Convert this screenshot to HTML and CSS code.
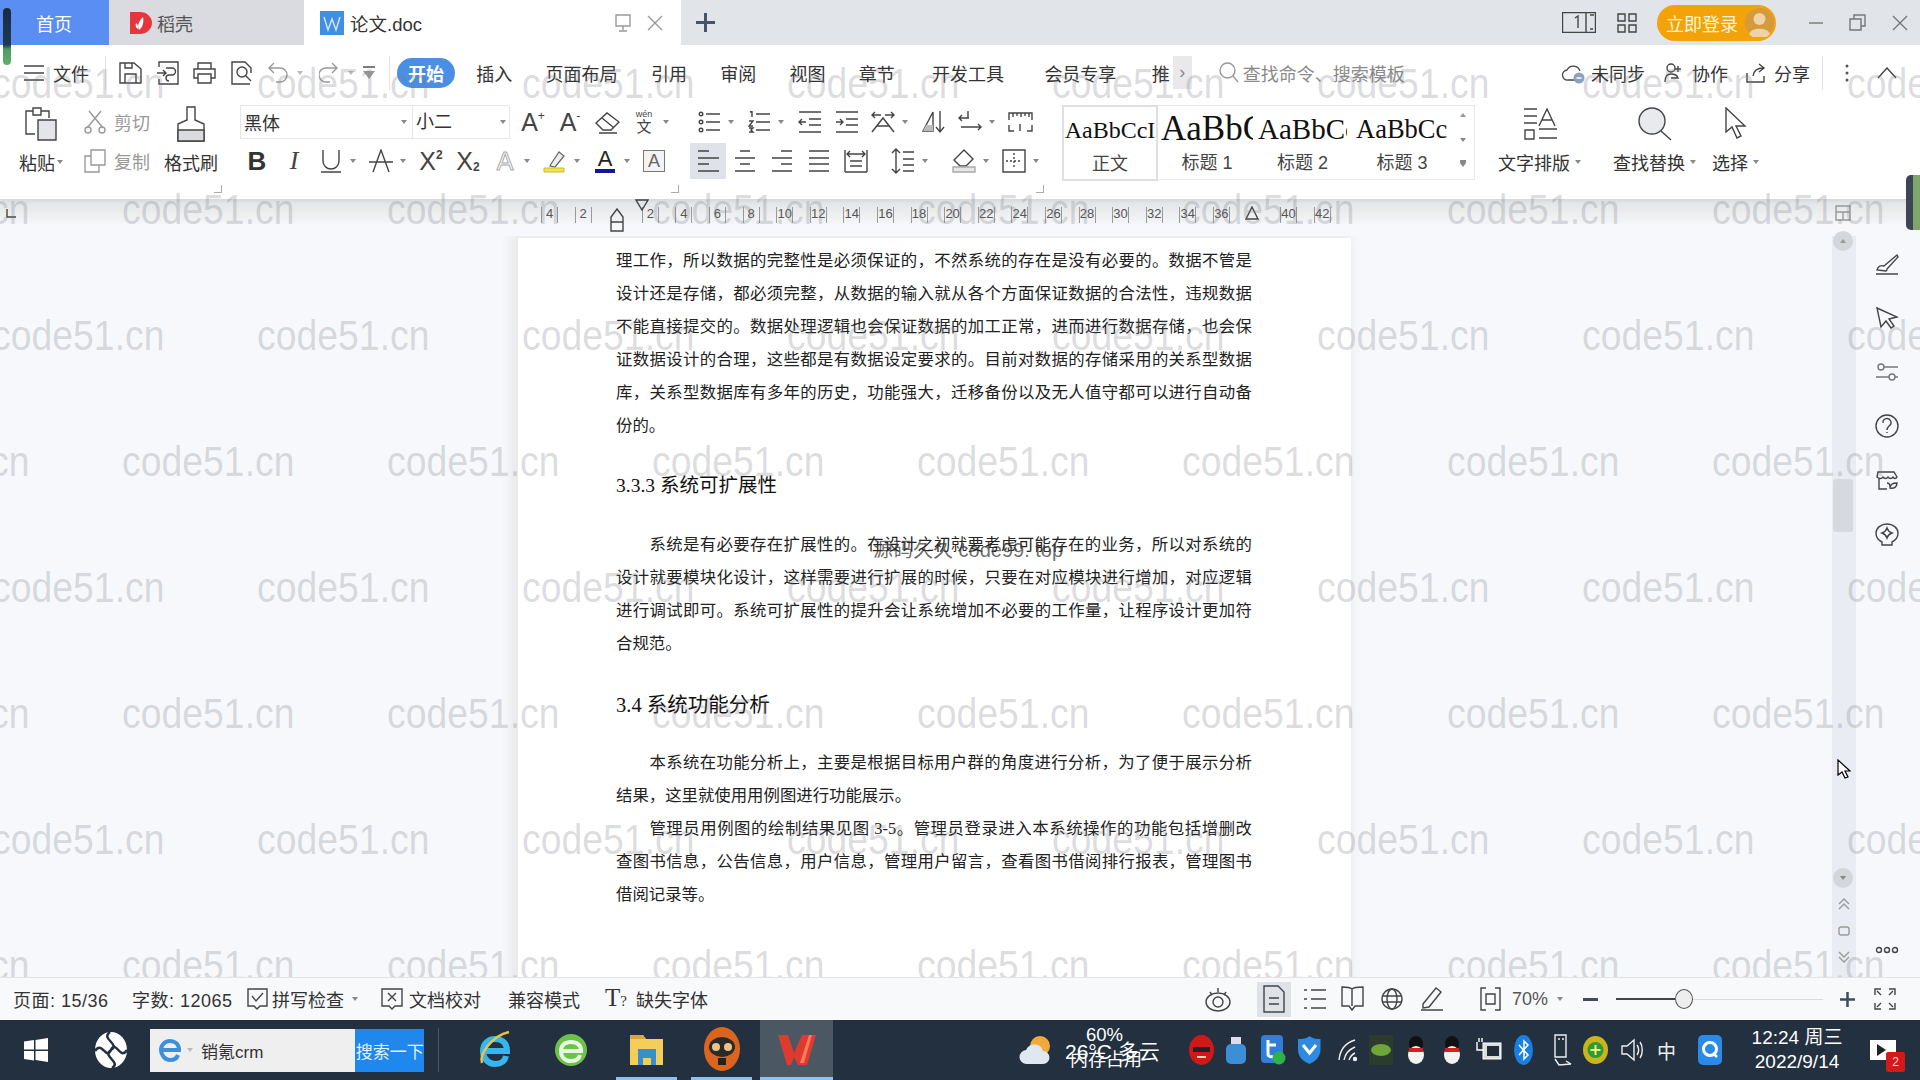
FILE: index.html
```html
<!DOCTYPE html>
<html lang="zh-CN">
<head>
<meta charset="utf-8">
<title>论文.doc - WPS</title>
<link rel="stylesheet" href="styles.css">
</head>
<body>
<div class="app">

<header class="tabbar">
  <div class="tab tab-home">首页</div>
  <div class="tab tab-dk">
    <svg width="23" height="24" viewBox="0 0 23 24"><path d="M0 1h10a12 11 0 0 1 0 22H0z" fill="#e8343c"/><path d="M9 19c-2-5 0-9 4-13 1 5 0 10-4 13zM6 12c-1 3 0 5 2 6 0-3 0-5-2-6z" fill="#fff"/></svg>
    <span>稻壳</span>
  </div>
  <div class="tab tab-doc">
    <svg width="24" height="24" viewBox="0 0 24 24"><rect width="24" height="24" fill="#3f8fe4"/><path d="M4 6l4 13 4-11 4 11 4-13" fill="none" stroke="#cfe4fa" stroke-width="1.500"/></svg>
    <span class="doc-name">论文.doc</span>
    <svg class="tab-mon i lite" width="16" height="18" viewBox="0 0 16 18"><path d="M1 1h14v11H1zM8 12v4M4 17h8"/></svg>
    <svg class="tab-x i lite" width="16" height="16" viewBox="0 0 16 16"><path d="M1 1l14 14M15 1L1 15"/></svg>
  </div>
  <svg class="tab-plus" width="19" height="19" viewBox="0 0 19 19"><path d="M9.500 0v19M0 9.500h19" stroke="#44546a" stroke-width="3"/></svg>
  <div class="tabbar-right">
    <svg class="i" width="34" height="21" viewBox="0 0 34 21"><path d="M.5.500h33v20H.5zM24 .5v20M13 6l3-2v12M28 3h4M28 17h3"/></svg>
    <svg class="i ml21" width="20" height="20" viewBox="0 0 20 20"><path d="M1 1h7v7H1zM12 1h7v7h-7zM1 12h7v7H1zM12 12h7v7h-7z"/></svg>
    <div class="login">
      <span>立即登录</span>
      <svg width="29" height="29" viewBox="0 0 29 29"><circle cx="14.500" cy="14.500" r="14.500" fill="#d59a3c"/><circle cx="14.500" cy="11" r="6" fill="#efd2a6"/><path d="M4 26c2-7 19-7 21 0a14 14 0 0 1-21 0z" fill="#efd2a6"/></svg>
    </div>
    <span class="vline ml13"></span>
    <svg class="i lite2 ml19" width="14" height="2" viewBox="0 0 14 2"><path d="M0 1h14"/></svg>
    <svg class="i lite2 ml26" width="17" height="17" viewBox="0 0 17 17"><path d="M1 5h11v11H1zM5 5V1h11v11h-4"/></svg>
    <svg class="i lite2 ml26" width="16" height="16" viewBox="0 0 16 16"><path d="M1 1l14 14M15 1L1 15"/></svg>
  </div>
</header>

<nav class="menubar">
  <svg class="i" width="20" height="16" viewBox="0 0 20 16"><path d="M0 1h20M0 8h20M0 15h20"/></svg>
  <span class="ml9">文件</span>
  <span class="vline ml16"></span>
  <div class="qa">
    <svg class="i" width="23" height="24" viewBox="0 0 23 24"><path d="M1 2h14l7 6v14H1zM6 22v-9h11v9M6 2v5h7V2"/></svg>
    <svg class="i" width="23" height="24" viewBox="0 0 23 24"><path d="M3 6V1h19v22H3v-5M1 12h9M7 9l3 3-3 3M10 7h6a3 3 0 0 1 0 7h-3a3 3 0 0 0 0 6"/></svg>
    <svg class="i" width="23" height="24" viewBox="0 0 23 24"><path d="M5 8V2h13v6M5 17H1V8h21v9h-4M5 13h13v9H5z"/></svg>
    <svg class="i" width="23" height="24" viewBox="0 0 23 24"><path d="M20 23H2V1h13l6 6v5M7 11a5 5 0 1 0 10 0 5 5 0 1 0-10 0M16 15l5 5"/></svg>
    <svg class="i gray" width="21" height="22" viewBox="0 0 21 22"><path d="M7 1L2 6l5 5M2 6h11a6.500 6.500 0 0 1 0 14H9"/></svg>
  </div>
  <i class="arr lgt ml9"></i>
  <svg class="i gray ml16" width="20" height="22" viewBox="0 0 20 22"><path d="M13 1l5 5-5 5M18 6H7a6.500 6.500 0 0 0 0 14h4"/></svg>
  <i class="arr lgt ml9"></i>
  <svg class="i ml9" width="12" height="16" viewBox="0 0 12 16"><path d="M0 2h12"/><path d="M0 6h12l-6 8z" fill="#999" stroke="none"/></svg>
  <span class="vline ml14"></span>
  <div class="menu-tabs">
    <span class="pill">开始</span>
    <span>插入</span><span>页面布局</span><span>引用</span><span>审阅</span><span>视图</span><span>章节</span>
    <span class="ml4">开发工具</span><span class="ml7">会员专享</span><span class="m-clip">推</span>
  </div>
  <div class="more">›</div>
  <svg class="i gray ml27" width="20" height="21" viewBox="0 0 20 21"><circle cx="8.500" cy="8.500" r="7.500"/><path d="M14 14l5 6"/></svg>
  <span class="search-t">查找命令、搜索模板</span>
  <div class="menu-right">
    <svg width="24" height="24" viewBox="0 0 24 24"><path d="M17 19H7a5 5 0 0 1-1-10 7 7 0 0 1 13 1" fill="none" stroke="#444" stroke-width="1.300"/><circle cx="18" cy="17" r="5.500" fill="#8aa2bd"/><path d="M15.500 17h5" stroke="#fff" stroke-width="1.500"/></svg>
    <span class="ml6">未同步</span>
    <svg class="i ml19" width="18" height="20" viewBox="0 0 18 20"><circle cx="7" cy="5" r="4"/><path d="M1 19c0-6 3-8 6-8s6 1 7 4H7M14 3v6M11 6h6"/></svg>
    <span class="ml10">协作</span>
    <svg class="i ml17" width="21" height="20" viewBox="0 0 21 20"><path d="M2 10v9h17v-6M8 13c1-6 5-8 10-8M14 1l5 4-5 4"/></svg>
    <span class="ml8">分享</span>
    <span class="vline ml12"></span>
    <svg class="ml20" width="8" height="20" viewBox="0 0 8 20"><circle cx="4" cy="3" r="1.500" fill="#555"/><circle cx="4" cy="10" r="1.500" fill="#555"/><circle cx="4" cy="17" r="1.500" fill="#555"/></svg>
    <svg class="i ml26" width="20" height="12" viewBox="0 0 20 12"><path d="M1 11L10 1l9 10"/></svg>
  </div>
</nav>

<section class="ribbon">
  <div class="sec sec-clip corner">
    <div class="big big-paste">
      <div class="big-ic"><svg class="i" width="32" height="34" viewBox="0 0 32 34"><path d="M10 27H1V4h7V1h8v3h8v7M8 4v4h8V4"/><path d="M13 13h18v20H13z" fill="#e3e5e9"/></svg></div>
      <div class="big-t">粘贴<i class="arr ml2"></i></div>
    </div>
    <div class="cc">
      <div class="cc-r"><svg class="i lite" width="22" height="24" viewBox="0 0 22 24"><path d="M5 1l14 17M17 1L3 18"/><circle cx="4" cy="20" r="3"/><circle cx="18" cy="20" r="3"/></svg><span>剪切</span></div>
      <div class="cc-r"><svg class="i lite" width="22" height="24" viewBox="0 0 22 24"><path d="M7 1h14v15H7zM7 7H1v16h14v-7"/></svg><span>复制</span></div>
    </div>
    <div class="big big-brush">
      <div class="big-ic"><svg class="i" width="28" height="36" viewBox="0 0 28 36"><path d="M10 14V1h8v13l9 4v17H1V18z"/><path d="M1 24h26v11H1z" fill="#d9dbdf"/></svg></div>
      <div class="big-t">格式刷</div>
    </div>
  </div>

  <div class="sec sec-font corner">
    <div class="row">
      <div class="fontbox"><span class="fb-name">黑体</span><i class="arr"></i><span class="fb-size">小二</span><i class="arr"></i></div>
      <span class="tb up-first">A<sup class="s">+</sup></span>
      <span class="tb">A<sup class="s">-</sup></span>
      <span class="tb"><svg class="i" width="25" height="24" viewBox="0 0 25 24"><path d="M1 13L12 3l12 9-8 8H8zM7 8l11 9M4 23h18"/></svg></span>
      <span class="tb wen"><small>wén</small><b>文</b></span><i class="arr"></i>
    </div>
    <div class="row row2">
      <span class="tb bold">B</span>
      <span class="tb ital">I</span>
      <span class="tb"><svg class="i" width="22" height="24" viewBox="0 0 22 24"><path d="M3 1v11a8 8 0 0 0 16 0V1M1 23h20"/></svg></span><i class="arr"></i>
      <span class="tb"><svg class="i" width="24" height="24" viewBox="0 0 24 24"><path d="M4 23L12 1l8 22M0 13h24"/></svg></span><i class="arr"></i>
      <span class="tb">X<sup class="s n">2</sup></span>
      <span class="tb">X<sub class="s n">2</sub></span>
      <span class="tb pale">A</span><i class="arr"></i>
      <span class="tb"><svg width="24" height="24" viewBox="0 0 24 24"><path d="M8 15l8-12 5 4-9 11-5-1z" fill="#eee" stroke="#666" stroke-width="1.200"/><path d="M1 19h20v4H1z" fill="#f0e44a" stroke="#c8bc30"/></svg></span><i class="arr"></i>
      <span class="tb blue-a">A<em></em></span><i class="arr"></i>
      <span class="tb boxed">A</span>
    </div>
  </div>

  <div class="sec sec-para corner">
    <div class="row">
      <span class="tb"><svg class="i" width="23" height="22" viewBox="0 0 23 22"><circle cx="3" cy="3" r="1.800"/><circle cx="3" cy="11" r="1.800"/><circle cx="3" cy="19" r="1.800"/><path d="M8 3h14M8 11h14M8 19h14"/></svg></span><i class="arr"></i>
      <span class="tb"><svg class="i" width="23" height="22" viewBox="0 0 23 22"><path d="M2 1l2-1v6M1 10h4l-4 5h4M1 17h4l-2 2 2 2H1M8 3h14M8 11h14M8 19h14"/></svg></span><i class="arr"></i>
      <span class="tb"><svg class="i" width="23" height="22" viewBox="0 0 23 22"><path d="M1 1h22M11 8h12M11 14h12M1 21h22M8 11H1M4 8l-3 3 3 3"/></svg></span>
      <span class="tb"><svg class="i" width="23" height="22" viewBox="0 0 23 22"><path d="M1 1h22M11 8h12M11 14h12M1 21h22M1 11h7M5 8l3 3-3 3"/></svg></span>
      <span class="tb"><svg class="i" width="24" height="24" viewBox="0 0 24 24"><path d="M1 22L12 8l11 14M6 16h12M1 5h9M4 2L1 5l3 3M23 5h-9M20 2l3 3-3 3"/></svg></span><i class="arr"></i>
      <span class="tb"><svg class="i" width="24" height="24" viewBox="0 0 24 24"><path d="M2 21L12 2v19zM19 1v20M15 17l4 5 4-5"/><path d="M5 15h7v6H2z" fill="#bbb" stroke="none"/></svg></span>
      <span class="tb"><svg class="i" width="24" height="24" viewBox="0 0 24 24"><path d="M1 8h10M4 5L1 8l3 3M10 1v7M3 17h20M20 14l3 3-3 3"/></svg></span><i class="arr"></i>
      <span class="tb"><svg class="i" width="25" height="20" viewBox="0 0 25 20"><path d="M1 8V1h23v7M5 1v4M9 1v3M13 1v4M17 1v3M21 1v4M1 13v6h5M24 13v6h-5M12 12v7"/></svg></span>
    </div>
    <div class="row row2p">
      <span class="tb active"><svg class="i" width="22" height="22" viewBox="0 0 22 22"><path d="M1 1h11M1 8h21M1 14h11M1 21h21"/></svg></span>
      <span class="tb"><svg class="i" width="22" height="22" viewBox="0 0 22 22"><path d="M6 1h10M1 8h20M6 14h10M1 21h20"/></svg></span>
      <span class="tb"><svg class="i" width="22" height="22" viewBox="0 0 22 22"><path d="M10 1h11M1 8h20M10 14h11M1 21h20"/></svg></span>
      <span class="tb"><svg class="i" width="22" height="22" viewBox="0 0 22 22"><path d="M1 1h20M1 8h20M1 14h20M1 21h20"/></svg></span>
      <span class="tb"><svg class="i" width="24" height="24" viewBox="0 0 24 24"><path d="M1 1v22M23 1v22M1 23h22M6 12h12M6 17h12M3 5h18M6 2L3 5l3 3M18 2l3 3-3 3"/></svg></span>
      <span class="tb ml10"><svg class="i" width="24" height="26" viewBox="0 0 24 26"><path d="M5 1v24M1 5l4-4 4 4M1 21l4 4 4-4M12 4h11M12 11h11M12 17h11M12 23h11"/></svg></span><i class="arr"></i>
      <span class="tb ml11"><svg class="i" width="24" height="24" viewBox="0 0 24 24"><path d="M12 1l9 9-7 7H8l-6-6z"/><path d="M1 18h22v5H1z" fill="#e5e5e5" stroke="#aaa"/></svg></span><i class="arr"></i>
      <span class="tb"><svg class="i" width="24" height="24" viewBox="0 0 24 24"><path d="M1 1h22v22H1z"/><path d="M12 4v16M4 12h16" stroke-dasharray="2 2"/></svg></span><i class="arr"></i>
    </div>
  </div>

  <div class="gallery">
    <div class="sty sty1"><div class="smp s1">AaBbCcI</div><div class="lbl">正文</div></div>
    <div class="sty sty2"><div class="smp s2">AaBbCc</div><div class="lbl">标题 1</div></div>
    <div class="sty sty3"><div class="smp s3">AaBbCc</div><div class="lbl">标题 2</div></div>
    <div class="sty sty4"><div class="smp s4">AaBbCcDd</div><div class="lbl">标题 3</div></div>
    <div class="sty-sc">
      <i class="arr arr-up lgt"></i>
      <i class="arr"></i>
      <i class="arr arr-line"></i>
    </div>
  </div>

  <div class="big big-wz">
    <div class="big-ic"><svg class="i" width="34" height="32" viewBox="0 0 34 32"><path d="M1 1h13M1 8h13M1 15h13M2 22h9v9H2zM16 18L24 1l8 17M19 12h10M16 21h18M16 30h18"/></svg></div>
    <div class="big-t">文字排版<i class="arr ml5"></i></div>
  </div>
  <div class="big big-fd">
    <div class="big-ic"><svg width="34" height="34" viewBox="0 0 34 34"><circle cx="14" cy="14" r="13" fill="#e9eaed" stroke="#444" stroke-width="1.400"/><path d="M23 24l10 9" stroke="#444" stroke-width="1.400"/></svg></div>
    <div class="big-t">查找替换<i class="arr ml5"></i></div>
  </div>
  <div class="big big-sl">
    <div class="big-ic"><svg class="i" width="24" height="34" viewBox="0 0 24 34"><path d="M2 1v24l6-5 5 11 4-2-5-10h9z"/></svg></div>
    <div class="big-t">选择<i class="arr ml5"></i></div>
  </div>
</section>

<div class="ruler">
  <svg class="r-tab i" width="10" height="10" viewBox="0 0 10 10"><path d="M1 1v8h9"/></svg>
  <div class="r-scale">
    <span>4</span><span>2</span><span class="r-no"></span><span>2</span><span>4</span><span>6</span><span>8</span><span>10</span><span>12</span><span>14</span><span>16</span><span>18</span><span>20</span><span>22</span><span>24</span><span>26</span><span>28</span><span>30</span><span>32</span><span>34</span><span>36</span><span class="r-no"></span><span>40</span><span>42</span>
  </div>
  <svg class="r-m1 i" width="14" height="24" viewBox="0 0 14 24"><path d="M7 1l6 8v5H1V9zM1 14h12v9H1z"/></svg>
  <svg class="r-m2 i" width="14" height="12" viewBox="0 0 14 12"><path d="M1 1h12l-6 10z"/></svg>
  <svg class="r-m3 i" width="14" height="14" viewBox="0 0 14 14"><path d="M7 1l6 12H1z"/></svg>
  <svg class="r-end i lite" width="16" height="16" viewBox="0 0 16 16"><path d="M1 1h14v14H1zM1 7h14M8 7v8"/></svg>
</div>

<main class="main">
  <div class="doc">
    <article class="page">
      <p class="ln">理工作，所以数据的完整性是必须保证的，不然系统的存在是没有必要的。数据不管是</p>
      <p class="ln">设计还是存储，都必须完整，从数据的输入就从各个方面保证数据的合法性，违规数据</p>
      <p class="ln">不能直接提交的。数据处理逻辑也会保证数据的加工正常，进而进行数据存储，也会保</p>
      <p class="ln">证数据设计的合理，这些都是有数据设定要求的。目前对数据的存储采用的关系型数据</p>
      <p class="ln">库，关系型数据库有多年的历史，功能强大，迁移备份以及无人值守都可以进行自动备</p>
      <p class="ln end">份的。</p>
      <h3 class="h333">3.3.3 系统可扩展性</h3>
      <p class="ln ind">系统是有必要存在扩展性的。在设计之初就要考虑可能存在的业务，所以对系统的</p>
      <p class="ln">设计就要模块化设计，这样需要进行扩展的时候，只要在对应模块进行增加，对应逻辑</p>
      <p class="ln">进行调试即可。系统可扩展性的提升会让系统增加不必要的工作量，让程序设计更加符</p>
      <p class="ln end">合规范。</p>
      <h3 class="h34">3.4 系统功能分析</h3>
      <p class="ln ind">本系统在功能分析上，主要是根据目标用户群的角度进行分析，为了便于展示分析</p>
      <p class="ln end">结果，这里就使用用例图进行功能展示。</p>
      <p class="ln ind">管理员用例图的绘制结果见图 3-5。管理员登录进入本系统操作的功能包括增删改</p>
      <p class="ln">查图书信息，公告信息，用户信息，管理用户留言，查看图书借阅排行报表，管理图书</p>
      <p class="ln end">借阅记录等。</p>
    </article>
    <div class="wm2">源码久久 code99. top</div>
  </div>
  <aside class="scroll">
    <div class="sb-btn sb-up"><i class="arr arr-up"></i></div>
    <div class="sb-thumb"></div>
    <div class="sb-btn sb-down"><i class="arr"></i></div>
    <svg class="sb-a i lite" width="12" height="12" viewBox="0 0 12 12"><path d="M1 6l5-5 5 5M1 11l5-5 5 5"/></svg>
    <svg class="sb-b i lite" width="12" height="10" viewBox="0 0 12 10"><rect x="1" y="1" width="10" height="8" rx="2"/></svg>
    <svg class="sb-c i lite" width="12" height="12" viewBox="0 0 12 12"><path d="M1 1l5 5 5-5M1 6l5 5 5-5"/></svg>
    <svg class="cursor" width="14" height="20" viewBox="0 0 14 20"><path d="M1 1v15l4-3 3 6 3-1-3-6h5z" fill="#fff" stroke="#000" stroke-width="1.200"/></svg>
  </aside>
  <aside class="side">
    <svg class="i" width="24" height="24" viewBox="0 0 24 24"><path d="M2 18c1-4 4-5 7-4L22 3l1 2L12 17c0 1 0 2-1 2zM1 22h22"/></svg>
    <svg class="i" width="24" height="24" viewBox="0 0 24 24"><path d="M2 2l20 9-8 2 5 7-3 2-5-7-5 6z"/></svg>
    <svg class="i lite2" width="24" height="24" viewBox="0 0 24 24"><circle cx="6" cy="7" r="3"/><circle cx="17" cy="17" r="3"/><path d="M9 7h14M1 17h13M20 17h3"/></svg>
    <svg class="i" width="24" height="24" viewBox="0 0 24 24"><circle cx="12" cy="12" r="11"/><path d="M8 9a4 4 0 1 1 6 3c-1 1-2 2-2 4M12 18v1"/></svg>
    <svg class="i" width="24" height="24" viewBox="0 0 24 24"><path d="M3 4h16l3 5c-1 2-3 2-4 0-1 2-4 2-5 0-1 2-4 2-5 0-1 2-4 2-6 0zM4 11v10h8M15 20c0-3 2-5 7-5 0 4-3 6-7 5zM12 15c2 0 3 1 3 4"/></svg>
    <svg class="i" width="24" height="24" viewBox="0 0 24 24"><path d="M12 2c6 0 11 4 11 9s-4 8-6 9v3H7v-3c-2-1-6-4-6-9s5-9 11-9zM12 6c1 3 2 4 5 5-3 1-4 2-5 5-1-3-2-4-5-5 3-1 4-2 5-5z"/></svg>
    <svg class="side-dots i" width="24" height="8" viewBox="0 0 24 8"><circle cx="4" cy="4" r="2.500"/><circle cx="12" cy="4" r="2.500"/><circle cx="20" cy="4" r="2.500"/></svg>
  </aside>
</main>

<footer class="status">
  <span class="st st1">页面: 15/36</span>
  <span class="st st2">字数: 12065</span>
  <svg class="i" width="21" height="24" viewBox="0 0 21 24"><path d="M1 2h19v17h-7l-3 3-3-3H1zM5 9l4 5 7-8"/></svg>
  <span class="ml4">拼写检查</span><i class="arr ml8"></i>
  <svg class="i ml23" width="22" height="24" viewBox="0 0 22 24"><path d="M1 2h20v17h-7l-3 3-3-3H1zM7 6l8 8M15 6l-8 8"/></svg>
  <span class="ml6">文档校对</span>
  <span class="ml27">兼容模式</span>
  <span class="t-q ml25">T<small>?</small></span>
  <span class="ml9">缺失字体</span>
  <div class="st-right">
    <svg class="i" width="26" height="26" viewBox="0 0 26 26"><ellipse cx="13" cy="16" rx="12" ry="9"/><circle cx="13" cy="16" r="5"/><path d="M5 6l2 3M13 2v4M21 6l-2 3"/></svg>
    <span class="view-active ml26"><svg class="i" width="22" height="28" viewBox="0 0 22 28"><path d="M1 1h14l6 6v20H1zM6 13h10M6 19h10"/></svg></span>
    <svg class="i ml12" width="23" height="22" viewBox="0 0 23 22"><path d="M1 2h3M8 2h15M1 11h3M8 11h15M1 20h3M8 20h15"/></svg>
    <svg class="i ml15" width="23" height="26" viewBox="0 0 23 26"><path d="M1 1c4 0 8 0 10 2 2-2 6-2 11-2v19H14l-3 4-3-4H1zM11 3v17"/></svg>
    <svg class="i ml17" width="22" height="24" viewBox="0 0 22 24"><circle cx="11" cy="12" r="10"/><ellipse cx="11" cy="12" rx="5" ry="10"/><path d="M1 9h20M1 15h20"/></svg>
    <svg class="i ml17" width="25" height="24" viewBox="0 0 25 24"><path d="M3 17L16 1l5 4L9 20l-6 1zM1 23h22"/></svg>
    <svg class="i ml35" width="21" height="24" viewBox="0 0 21 24"><path d="M6 1H1v22h5M15 1h5v22h-5M6 7h9v10H6z"/></svg>
    <span class="z70 ml11">70%</span><i class="arr ml5"></i>
    <span class="minus ml20"></span>
    <div class="slider ml18"><span class="s-a"></span><span class="s-k"></span><span class="s-b"></span></div>
    <svg class="ml17" width="15" height="15" viewBox="0 0 15 15"><path d="M7.500 0v15M0 7.500h15" stroke="#3d4d60" stroke-width="2.500"/></svg>
    <svg class="i ml19" width="22" height="22" viewBox="0 0 22 22"><path d="M1 7V1h6M3 3l4 4M15 1h6v6M19 3l-4 4M1 15v6h6M3 19l4-4M15 21h6v-6M19 19l-4-4"/></svg>
  </div>
</footer>

<footer class="taskbar">
  <svg class="win" width="24" height="24" viewBox="0 0 24 24"><path d="M0 3.500l10-1.500v9.500H0zM11.500 2L24 0v11.500H11.500zM0 13h10v9.500L0 21zM11.500 13H24v11l-12.500-2z" fill="#fff"/></svg>
  <svg class="swirl" width="32" height="36" viewBox="0 0 32 36"><ellipse cx="16" cy="18" rx="16" ry="18" fill="#fff"/><path d="M15 0C5 7 26 12 16 18S27 30 17 36M0 19c7-11 11 10 16-1s9 11 16 0" fill="none" stroke="#22303f" stroke-width="2.500"/></svg>
  <div class="tsearch">
    <svg class="ts-e" width="24" height="30" viewBox="0 0 24 30"><path d="M3 15h18c0-6-4-9-9-9s-9 4-9 9 4 10 9 10c4 0 7-2 8-5" fill="none" stroke="#3a8fe0" stroke-width="4"/></svg>
    <i class="arr lgt ml5"></i>
    <span class="ts-t">销氪crm</span>
    <span class="ts-btn">搜索一下</span>
  </div>
  <span class="tdiv"></span>
  <svg class="tapp a-ie" width="34" height="40" viewBox="0 0 34 40"><path d="M5 21h24c0-8-5-12-12-12S5 14 5 21s5 13 12 13c6 0 10-3 11-8" fill="none" stroke="#35b6ec" stroke-width="6"/><path d="M4 33C1 24 14 6 31 2" fill="none" stroke="#e6c34a" stroke-width="2.500"/></svg>
  <svg class="tapp a-ge" width="34" height="40" viewBox="0 0 34 40"><circle cx="17" cy="20" r="16" fill="#6cc24a"/><path d="M7 21h20c0-6-4-9-10-9S7 15 7 21s4 10 10 10c5 0 8-2 9-6" fill="none" stroke="#e9f8e2" stroke-width="4"/></svg>
  <div class="tbtn b-fold"><svg width="35" height="36" viewBox="0 0 35 36"><path d="M1 4h13l3 4h17v26H1z" fill="#f4cd5a"/><path d="M1 4h13l3 4H1z" fill="#d9a63a"/><path d="M9 18h18v16h-5v-7h-8v7H9z" fill="#3a8ecf"/></svg></div>
  <div class="tbtn b-face"><svg width="36" height="44" viewBox="0 0 36 44"><ellipse cx="18" cy="22" rx="18" ry="22" fill="#d9651e"/><ellipse cx="18" cy="20" rx="13" ry="10" fill="#2a2a2a"/><circle cx="12" cy="20" r="4" fill="#e8c48a"/><circle cx="24" cy="20" r="4" fill="#e8c48a"/><rect x="14" y="31" width="8" height="7" fill="#222"/></svg></div>
  <div class="tbtn b-wps"><svg width="38" height="34" viewBox="0 0 38 34"><path d="M0 3h10l6 18L24 3h14l-9 30h-9l-4-8-3 8H9z" fill="#e03a2e"/><path d="M22 31L31 3h3l-8 28z" fill="#f77a5a"/></svg></div>
  <div class="tray">
    <div class="weather">
      <svg width="33" height="30" viewBox="0 0 33 30"><circle cx="21" cy="11" r="10" fill="#f2a93c"/><path d="M8 29a7 7 0 0 1-1-14 9 9 0 0 1 17 1 6.500 6.500 0 0 1 0 13z" fill="#dfe7f0"/></svg>
      <span class="w-main">26°C 多云</span>
      <span class="w-pct">60%</span>
      <span class="w-mem">内存占用</span>
    </div>
    <svg class="tr r1" width="25" height="30" viewBox="0 0 25 30"><ellipse cx="12.500" cy="15" rx="12.500" ry="15" fill="#d11818"/><path d="M4 12h17v5H4z" fill="#222"/><path d="M8 21h9v2H8z" fill="#f2d0b0"/></svg>
    <svg class="tr r2" width="20" height="30" viewBox="0 0 20 30"><path d="M5 2h10v8H5z" fill="#dde"/><rect y="9" width="20" height="20" rx="5" fill="#3c8ed8"/></svg>
    <svg class="tr r3" width="25" height="30" viewBox="0 0 25 30"><rect width="22" height="28" rx="4" fill="#2f7fd8"/><path d="M7 5v14c0 3 3 3 6 3M7 10h8" stroke="#fff" stroke-width="3" fill="none"/><circle cx="18" cy="23" r="6.500" fill="#2eb34a"/></svg>
    <svg class="tr r4" width="23" height="30" viewBox="0 0 23 30"><path d="M11.500 1c4 3 7 3 11 3v11c0 7-6 12-11 14C6 27 0 22 0 15V4c4 0 8 0 11.500-3z" fill="#2f8ae0"/><path d="M5 10l6.500 8L18 10" fill="none" stroke="#fff" stroke-width="3"/></svg>
    <svg class="tr r5 i wh" width="20" height="24" viewBox="0 0 20 24"><path d="M1 22C2 12 7 5 17 2M6 22c1-6 4-10 11-13M11 22c1-3 2-5 6-7"/><circle cx="17" cy="21" r="1.500" fill="#fff"/></svg>
    <svg class="tr r6" width="24" height="30" viewBox="0 0 24 30"><rect width="24" height="30" fill="#2b3b2e"/><ellipse cx="12" cy="15" rx="10" ry="6" fill="#6fa53a"/></svg>
    <svg class="tr r7" width="18" height="28" viewBox="0 0 18 28"><ellipse cx="9" cy="8" rx="7" ry="8" fill="#111"/><ellipse cx="9" cy="19" rx="8" ry="9" fill="#f3f3f3"/><path d="M2 12h14v4H2z" fill="#d42020"/></svg>
    <svg class="tr r8" width="18" height="28" viewBox="0 0 18 28"><ellipse cx="9" cy="8" rx="7" ry="8" fill="#111"/><ellipse cx="9" cy="19" rx="8" ry="9" fill="#f3f3f3"/><path d="M2 12h14v4H2z" fill="#d42020"/></svg>
    <svg class="tr r9" width="26" height="24" viewBox="0 0 26 24"><path d="M1 4v8h6M3 4V0M6 4V0" stroke="#fff" fill="none" stroke-width="1.400"/><rect x="7" y="5" width="18" height="16" fill="#ddd" stroke="#fff"/><rect x="11" y="8" width="12" height="10" fill="#1f2d3a"/></svg>
    <svg class="tr r10" width="19" height="30" viewBox="0 0 19 30"><ellipse cx="9.500" cy="15" rx="9.500" ry="15" fill="#1b7fe0"/><path d="M5 10l9 10-4 4V6l4 4-9 10" fill="none" stroke="#fff" stroke-width="1.500"/></svg>
    <svg class="tr r11 i wh" width="19" height="32" viewBox="0 0 19 32"><path d="M2 1h11v22H2zM5 5h2M9 5h2M2 25l4 6 12-1M13 27l5 3"/></svg>
    <svg class="tr r12" width="25" height="28" viewBox="0 0 25 28"><ellipse cx="12.500" cy="14" rx="12.500" ry="14" fill="#cbb51c"/><circle cx="12.500" cy="14" r="8" fill="#2b9c3a"/><path d="M12.500 9v10M7.500 14h10" stroke="#f6ee70" stroke-width="2"/></svg>
    <svg class="tr r13 i wh" width="22" height="24" viewBox="0 0 22 24"><path d="M1 8h5l7-6v20l-7-6H1zM16 7c2 3 2 7 0 10M19 4c3 4 3 12 0 16"/></svg>
    <span class="tr r14">中</span>
    <svg class="tr r15" width="24" height="30" viewBox="0 0 24 30"><rect width="24" height="30" rx="5" fill="#2a8ae8"/><circle cx="12" cy="14" r="6.500" fill="none" stroke="#fff" stroke-width="3"/><path d="M15 18l4 4" stroke="#fff" stroke-width="2.500"/></svg>
    <div class="clock"><div>12:24 周三</div><div>2022/9/14</div></div>
    <div class="notif"><i class="n-play"></i><span class="n-badge">2</span></div>
  </div>
</footer>

<div class="wm" aria-hidden="true">
  <div class="wm-r rb"><span>code51.cn</span><span>code51.cn</span><span>code51.cn</span><span>code51.cn</span><span>code51.cn</span><span>code51.cn</span><span>code51.cn</span><span>code51.cn</span></div>
  <div class="wm-r ra"><span>code51.cn</span><span>code51.cn</span><span>code51.cn</span><span>code51.cn</span><span>code51.cn</span><span>code51.cn</span><span>code51.cn</span><span>code51.cn</span></div>
  <div class="wm-r rb"><span>code51.cn</span><span>code51.cn</span><span>code51.cn</span><span>code51.cn</span><span>code51.cn</span><span>code51.cn</span><span>code51.cn</span><span>code51.cn</span></div>
  <div class="wm-r ra"><span>code51.cn</span><span>code51.cn</span><span>code51.cn</span><span>code51.cn</span><span>code51.cn</span><span>code51.cn</span><span>code51.cn</span><span>code51.cn</span></div>
  <div class="wm-r rb"><span>code51.cn</span><span>code51.cn</span><span>code51.cn</span><span>code51.cn</span><span>code51.cn</span><span>code51.cn</span><span>code51.cn</span><span>code51.cn</span></div>
  <div class="wm-r ra"><span>code51.cn</span><span>code51.cn</span><span>code51.cn</span><span>code51.cn</span><span>code51.cn</span><span>code51.cn</span><span>code51.cn</span><span>code51.cn</span></div>
  <div class="wm-r rb"><span>code51.cn</span><span>code51.cn</span><span>code51.cn</span><span>code51.cn</span><span>code51.cn</span><span>code51.cn</span><span>code51.cn</span><span>code51.cn</span></div>
  <div class="wm-r ra"><span>code51.cn</span><span>code51.cn</span><span>code51.cn</span><span>code51.cn</span><span>code51.cn</span><span>code51.cn</span><span>code51.cn</span><span>code51.cn</span></div>
</div>
<div class="widget-l"></div>
<div class="widget-r"></div>
</div>
</body>
</html>
```

FILE: styles.css
```css
* { box-sizing: border-box; }
html, body { margin: 0; padding: 0; height: 100%; overflow: hidden; }
body { font-family: "Liberation Sans", "Noto Sans CJK SC", sans-serif; font-size: 18px; color: #333; background: #fff; }
.app { position: relative; width: 1920px; height: 1080px; display: flex; flex-direction: column; overflow: hidden; }
svg { display: block; flex: none; }
.i { fill: none; stroke: #444; stroke-width: 1.400; }
.i.gray { stroke: #999; }
.i.lite { stroke: #999; }
.i.lite2 { stroke: #777; }
.i.wh { stroke: #eee; }
.ml2 { margin-left: 2px; } .ml4 { margin-left: 4px; } .ml5 { margin-left: 5px; } .ml6 { margin-left: 6px; }
.ml7 { margin-left: 7px; } .ml8 { margin-left: 8px; } .ml9 { margin-left: 9px; } .ml10 { margin-left: 10px; }
.ml11 { margin-left: 11px; } .ml12 { margin-left: 12px; } .ml13 { margin-left: 13px; } .ml14 { margin-left: 14px; }
.ml15 { margin-left: 15px; } .ml16 { margin-left: 16px; } .ml17 { margin-left: 17px; } .ml18 { margin-left: 18px; }
.ml19 { margin-left: 19px; } .ml20 { margin-left: 20px; } .ml21 { margin-left: 21px; } .ml23 { margin-left: 23px; }
.ml25 { margin-left: 25px; } .ml26 { margin-left: 26px; } .ml27 { margin-left: 27px; } .ml28 { margin-left: 28px; }
.ml35 { margin-left: 35px; }
.arr { display: block; flex: none; width: 6px; height: 4px; border-left: 3px solid transparent; border-right: 3px solid transparent; border-top: 4px solid #888; }
.arr.lgt { border-top-color: #bbb; }
.arr-up { border-top: 0; border-bottom: 4px solid #999; }
.vline { display: block; flex: none; width: 1px; height: 34px; background: #e2e3e6; }

/* tab bar */
.tabbar { height: 45px; flex: none; display: flex; align-items: stretch; background: #e1e4e8; }
.tab { display: flex; align-items: center; flex: none; }
.tab-home { width: 109px; padding-left: 36px; background: #5a8ef2; color: #fff; }
.tab-dk { width: 195px; padding-left: 21px; gap: 4px; background: #d9dbe0; color: #555; }
.tab-doc { width: 377px; padding-left: 16px; background: #fff; color: #333; }
.doc-name { margin-left: 6px; font-size: 18.500px; width: 77px; }
.tab-mon { margin-left: 188px; }
.tab-x { margin-left: 16px; }
.tab-plus { align-self: center; margin-left: 15px; }
.tabbar-right { margin-left: auto; padding-right: 12px; display: flex; align-items: center; }
.login { margin-left: 20px; width: 119px; height: 36px; border-radius: 18px; background: #f2a30a; color: #fff3d6; display: flex; align-items: center; justify-content: space-between; padding: 0 2px 0 9px; }

/* menu */
.menubar { height: 55px; flex: none; display: flex; align-items: center; padding-left: 24px; background: #fff; white-space: nowrap; }
.qa { margin-left: 13px; display: flex; align-items: center; gap: 14px; }
.menu-tabs { margin-left: 7px; display: flex; align-items: center; gap: 33.300px; }
.pill { height: 30px; padding: 0 11px; margin-right: -12px; border-radius: 15px; background: #4a8fe4; color: #fff; font-weight: bold; display: flex; align-items: center; }
.m-clip { margin-left: 2px; }
.more { margin-left: 3px; width: 19px; height: 33px; background: #e9e9ec; color: #888; display: flex; align-items: center; justify-content: center; }
.search-t { margin-left: 4px; color: #8a8a8a; }
.menu-right { margin-left: auto; padding-right: 23px; display: flex; align-items: center; }

/* ribbon */
.ribbon { height: 99px; flex: none; display: flex; align-items: flex-start; padding-top: 2px; background: #fff; position: relative; z-index: 1; box-shadow: 0 2px 4px rgba(0,0,0,.06); white-space: nowrap; }
.sec { flex: none; height: 97px; display: flex; }
.corner { position: relative; }
.corner::after { content: ""; position: absolute; right: 18px; bottom: 6px; width: 7px; height: 7px; border-right: 1px solid #aaa; border-bottom: 1px solid #aaa; }
.sec-clip { width: 240px; }
.sec-font { width: 457px; flex-direction: column; }
.sec-para { width: 365px; flex-direction: column; }
.big { flex: none; display: flex; flex-direction: column; align-items: center; }
.big-ic { height: 44px; display: flex; align-items: center; justify-content: center; }
.big-t { height: 32px; display: flex; align-items: center; }
.big-paste { margin-left: 19px; }
.cc { margin-left: 21px; display: flex; flex-direction: column; color: #999; }
.cc-r { height: 39px; display: flex; align-items: center; gap: 8px; }
.big-brush { margin-left: 14px; width: 54px; }
.row { height: 39px; flex: none; display: flex; align-items: center; gap: 13px; }
.row2 { padding-left: 5px; }
.row2p { padding-left: 0; margin-left: -1px; }
.row .arr { margin-left: -6px; }
.tb { flex: none; width: 24px; height: 24px; display: flex; align-items: center; justify-content: center; font-size: 25px; line-height: 24px; color: #444; position: relative; }
.s { font-size: 12px; line-height: 1; margin-left: 0; }
.s.n { font-weight: bold; }
sup.s { align-self: flex-start; }
sub.s { align-self: flex-end; }
.bold { font-weight: bold; font-size: 26px; color: #333; }
.ital { font-family: "Liberation Serif", serif; font-style: italic; font-size: 26px; }
.pale { color: #fff; -webkit-text-stroke: 1px #aaa; }
.blue-a { font-size: 22px; color: #222; flex-direction: column; line-height: 19px; }
.blue-a em { display: block; width: 20px; height: 4px; background: #14149e; margin-top: 1px; }
.boxed { width: 22px; height: 22px; border: 1.500px solid #777; background: #f3f3f3; font-size: 18px; color: #666; }
.active { background: #dfe2e8; box-shadow: 0 0 0 6px #dfe2e8; }
.up-first { margin-left: -2px; }
.fontbox { width: 270px; height: 34px; display: flex; align-items: center; border: 1px solid #e6e6e6; font-size: 18px; }
.fontbox .arr { margin-left: 0; }
.fb-name { margin-left: 3px; width: 157px; }
.fb-size { margin-left: 5px; padding-left: 3px; border-left: 1px solid #e8e8e8; width: 88px; line-height: 32px; }
.wen { flex-direction: column; color: #444; }
.wen small { font-size: 9px; line-height: 10px; }
.wen b { font-weight: normal; font-size: 15px; line-height: 15px; }
.gallery { flex: none; width: 413px; height: 75px; margin-top: 3px; display: flex; border: 1px solid #e8e8e8; border-left: 0; position: relative; }
.sty { flex: none; overflow: hidden; text-align: center; }
.smp { height: 44px; line-height: 46px; font-family: "Liberation Serif", serif; color: #111; white-space: nowrap; }
.lbl { height: 30px; line-height: 27px; font-size: 18px; color: #444; }
.sty1 { width: 96px; margin-left: 0; border: 2px solid #e0e0e0; border-top-width: 2px; margin-top: -1px; height: 76px; }
.sty2 { width: 92px; margin-left: 3px; }
.sty3 { width: 89px; margin-left: 5px; }
.sty4 { width: 92px; margin-left: 9px; }
.s1 { font-size: 24px; }
.s2 { font-size: 35px; text-align: left; }
.s3 { font-size: 29px; text-align: left; }
.s4 { font-size: 26.500px; text-align: left; }
.sty-sc { flex: none; margin-left: 5px; width: 20px; display: flex; flex-direction: column; align-items: center; gap: 21px; padding-top: 7px; }
.arr-line { box-shadow: 0 -3px 0 -0px #888; }
.big-wz { margin-left: 23px; }
.big-fd { margin-left: 32px; }
.big-sl { margin-left: 16px; }

/* ruler */
.ruler { height: 37px; flex: none; position: relative; background: linear-gradient(#e2e3e5 0, #f2f3f5 22px, #f6f8fb 26px); }
.r-tab { position: absolute; left: 6px; top: 9px; }
.r-scale { position: absolute; left: 541px; top: 8px; display: flex; gap: 16.600px; }
.r-scale span { flex: none; width: 17px; height: 16px; border-left: 1px solid #999; border-right: 1px solid #999; font-size: 13px; line-height: 13px; text-align: center; color: #555; }
.r-scale .r-no { border-color: transparent; }
.r-m1 { position: absolute; left: 610px; top: 9px; }
.r-m2 { position: absolute; left: 635px; top: 0; }
.r-m3 { position: absolute; left: 1245px; top: 7px; }
.r-end { position: absolute; left: 1835px; top: 6px; }

/* main */
.main { flex: 1; min-height: 0; display: flex; background: #f6f8fb; }
.doc { flex: none; width: 1832px; position: relative; overflow: hidden; padding: 2px 0 0 518px; }
.page { width: 833px; height: 800px; background: #fff; padding: 7px 99px 0 98px; box-shadow: -4px 0 10px 4px #e9e9ea; color: #222; font-family: "Liberation Serif", "Noto Sans CJK SC", serif; font-size: 16.400px; line-height: 32.900px; }
.ln { margin: 0; text-align: justify; text-align-last: justify; }
.ln.end { text-align-last: left; }
.ind { padding-left: 33.400px; }
h3 { margin: 0; font-weight: normal; color: #111; line-height: 32.900px; }
.h333 { font-size: 19.500px; margin-top: 27.500px; margin-bottom: 26px; }
.h34 { font-size: 20.500px; margin-top: 28.500px; margin-bottom: 25px; }
.wm2 { position: absolute; left: 873px; top: 302px; font-size: 20px; line-height: 24px; color: rgba(50,50,50,.72); white-space: nowrap; }
.scroll { flex: none; width: 24px; background: #e9ecf3; display: flex; flex-direction: column; align-items: center; position: relative; }
.sb-btn { flex: none; width: 20px; height: 20px; border-radius: 50%; background: #d3d6db; display: flex; align-items: center; justify-content: center; margin-left: -2px; }
.sb-up { margin-top: -5px; }
.sb-thumb { flex: none; width: 20px; height: 53px; margin: 228px 0 0 -2px; background: #d6d9de; border-radius: 3px; }
.sb-down { margin-top: 336px; }
.sb-a { margin-top: 10px; }
.sb-b { margin-top: 16px; }
.sb-c { margin-top: 15px; }
.cursor { position: absolute; left: 5px; top: 523px; }
.side { flex: none; width: 64px; padding-right: 2px; display: flex; flex-direction: column; align-items: center; gap: 30px; padding-top: 16px; }
.side-dots { margin-top: auto; margin-bottom: 23px; }

/* status */
.status { height: 43px; flex: none; display: flex; align-items: center; padding-left: 13px; background: #f8f9fb; border-top: 1px solid #e3e4e6; white-space: nowrap; position: relative; z-index: 2; }
.st { letter-spacing: .5px; }
.st1 { width: 119px; }
.st2 { width: 115px; }
.t-q { font-family: "Liberation Serif", serif; font-size: 25px; line-height: 28px; }
.t-q small { font-size: 15px; }
.st-right { margin-left: auto; padding-right: 24px; display: flex; align-items: center; }
.view-active { width: 34px; height: 35px; background: #dfe3e8; display: flex; align-items: center; justify-content: center; }
.z70 { width: 40px; color: #555; }
.minus { width: 15px; height: 3px; background: #3d4d60; }
.slider { width: 207px; display: flex; align-items: center; }
.s-a { width: 59px; height: 2px; background: #444; }
.s-k { width: 18px; height: 20px; border-radius: 50%; border: 1.500px solid #555; background: #eee; }
.s-b { flex: 1; height: 1px; background: #ddd; }

/* taskbar */
.taskbar { height: 60px; flex: none; display: flex; align-items: center; background: #22303f; color: #fff; padding-left: 24px; position: relative; z-index: 2; white-space: nowrap; }
.swirl { margin-left: 47px; }
.tsearch { margin-left: 23px; width: 274px; height: 43px; display: flex; align-items: center; background: #efefef; color: #333; padding-left: 8px; font-size: 17px; }
.ts-t { margin-left: 8px; width: 155px; }
.ts-btn { margin-left: auto; width: 69px; height: 43px; background: #1f88ef; color: #e4f1ff; display: flex; align-items: center; justify-content: center; font-size: 17px; }
.tdiv { margin-left: 14px; width: 1px; height: 44px; background: #4a5663; }
.a-ie { margin-left: 39px; }
.a-ge { margin-left: 42px; }
.tbtn { flex: none; height: 60px; display: flex; align-items: center; justify-content: center; border-bottom: 3px solid #8fc1ef; }
.b-fold { width: 61px; margin-left: 28px; }
.b-face { width: 61px; margin-left: 14px; }
.b-wps { width: 73px; margin-left: 8px; background: #4b5763; }
.tray { flex: 1; display: flex; align-items: center; }
.weather { margin-left: 186px; display: flex; align-items: center; position: relative; }
.w-main { margin-left: 13px; font-size: 21px; width: 124px; }
.w-pct { position: absolute; left: 67px; top: -12px; font-size: 18.500px; line-height: 24px; }
.w-mem { position: absolute; left: 51px; top: 13px; font-size: 18px; line-height: 24px; }
.r1 { margin-left: 0; }
.r2 { margin-left: 12px; }
.r3 { margin-left: 15px; }
.r4 { margin-left: 12px; }
.r5 { margin-left: 17px; }
.r6 { margin-left: 11px; }
.r7 { margin-left: 14px; }
.r8 { margin-left: 18px; }
.r9 { margin-left: 15px; }
.r10 { margin-left: 12px; }
.r11 { margin-left: 20px; }
.r12 { margin-left: 11px; }
.r13 { margin-left: 13px; }
.r14 { margin-left: 14px; font-size: 19px; color: #eee; }
.r15 { margin-left: 22px; }
.clock { margin-left: 27px; width: 96px; text-align: center; font-size: 19px; line-height: 24px; }
.notif { margin-left: 25px; width: 26px; height: 20px; background: #fff; position: relative; }
.n-play { display: block; margin: 4px 0 0 7px; width: 0; height: 0; border-left: 9px solid #222; border-top: 6px solid transparent; border-bottom: 6px solid transparent; }
.n-badge { position: absolute; left: 16px; top: 12px; width: 19px; height: 20px; background: #d21a1a; color: #ffd9d9; font-size: 12px; line-height: 20px; text-align: center; border-radius: 2px; }

/* overlays */
.wm { position: absolute; left: 0; top: 21px; width: 1920px; height: 956px; overflow: hidden; pointer-events: none; z-index: 1; }
.wm-r { height: 126px; display: flex; align-items: center; }
.wm-r span { flex: none; width: 265px; font-family: "Liberation Sans", sans-serif; font-size: 42px; line-height: 50px; color: rgba(120,122,128,.26); white-space: nowrap; transform: scaleX(.89); transform-origin: 0 50%; }
.ra { margin-left: -143px; }
.rb { margin-left: -8px; }
.widget-l { position: absolute; left: 3px; top: 8px; width: 8px; height: 57px; border-radius: 4px; background: linear-gradient(#1b2a46 0, #1f3a52 65%, #4f9a62 72%, #60b070 100%); z-index: 3; }
.widget-r { position: absolute; left: 1906px; top: 175px; width: 20px; height: 55px; border-radius: 5px; background: linear-gradient(90deg, #3c4654 0 35%, #7ea66a 35% 80%, #3c4654 80%); z-index: 3; }
```
